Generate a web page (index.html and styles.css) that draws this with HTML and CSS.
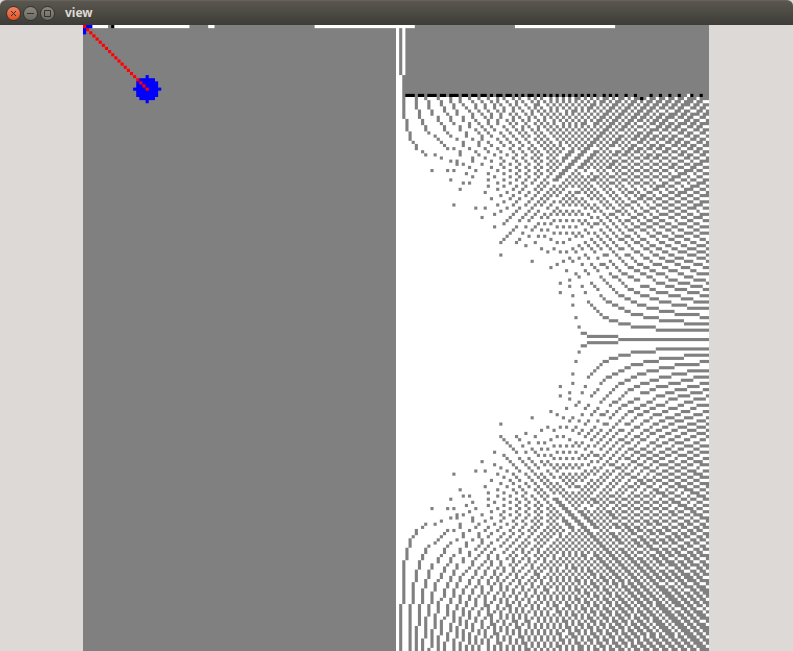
FILE: index.html
```html
<!DOCTYPE html>
<html lang="en">
<head>
<meta charset="utf-8">
<title>view</title>
<link rel="stylesheet" href="styles.css">
</head>
<body>
<header class="titlebar">
  <button class="control control-close" type="button" aria-label="Close"><svg viewBox="0 0 13 13"><path d="M4 4l5 5M9 4l-5 5"/></svg></button>
  <button class="control" type="button" aria-label="Minimize"><svg viewBox="0 0 13 13"><path d="M3 6.5h7"/></svg></button>
  <button class="control" type="button" aria-label="Maximize"><svg viewBox="0 0 13 13"><path d="M3.5 3.5h6v6h-6z"/></svg></button>
  <h1 class="title">view</h1>
</header>
<main class="stage">
  <canvas class="map" role="img" aria-label="Occupancy map"></canvas>
</main>
<script src="map.js"></script>
</body>
</html>
```
FILE: styles.css
```css
* { box-sizing: border-box; }
html, body { height: 100%; margin: 0; }
body {
  display: flex;
  flex-direction: column;
  background: #dcd9d6;
  overflow: hidden;
}
.titlebar {
  display: flex;
  flex: none;
  align-items: center;
  gap: 2px;
  height: 25px;
  padding: 0 6px;
  border-top: 1px solid #65635b;
  border-radius: 6px 6px 0 0;
  background: linear-gradient(#59574f, #3d3c37);
}
.control {
  display: block;
  width: 15px;
  height: 15px;
  padding: 0;
  border: 1px solid #33322e;
  border-radius: 50%;
  background: linear-gradient(#8b897f, #6b6961);
}
.control-close { background: linear-gradient(#f58362, #e3501f); }
.control svg {
  display: block;
  width: 13px;
  height: 13px;
  fill: none;
  stroke: #33322e;
  stroke-width: 1;
}
.title {
  margin: 0 0 0 8px;
  color: #dfdbd2;
  font: bold 12px/24px "Noto Sans", "Open Sans", sans-serif;
}
.stage {
  display: flex;
  flex: 1;
  justify-content: center;
  min-height: 0;
  padding-right: 1px;
}
.map {
  display: block;
  height: 100%;
  aspect-ratio: 1;
}
```
FILE: map.js
```js
const SIZE = 200;
const UNKNOWN = [128, 128, 128];
const FREE = [255, 255, 255];
const WALL = [0, 0, 0];
const ROBOT = [0, 0, 255];
const PATH = [255, 0, 0];
const cells = new Array(SIZE * SIZE).fill(UNKNOWN);

function put(x, y, color) {
  if (x >= 0 && y >= 0 && x < SIZE && y < SIZE) cells[y * SIZE + x] = color;
}

// Draws a line of cells, ending early at the optional stop cell.
function line(x0, y0, x1, y1, color, stop) {
  const dx = Math.abs(x1 - x0), dy = Math.abs(y1 - y0);
  const n = Math.max(dx, dy);
  for (let i = 0; i <= n; i++) {
    const x = x0 + Math.ceil((2 * i * dx - n) / (2 * n)) * Math.sign(x1 - x0);
    const y = y0 + Math.ceil((2 * i * dy - n) / (2 * n)) * Math.sign(y1 - y0);
    if (stop && (y < stop[1] || (y === stop[1] && x > stop[0]))) return;
    put(x, y, color);
  }
}

function disc(cx, cy, r) {
  for (let y = -r; y <= r; y++)
    for (let x = -r; x <= r; x++)
      if (x * x + y * y <= r * r) put(cx + x, cy + y, ROBOT);
}

// Laser sweep: 180 beams over 180 degrees from the map centre.
const BEAMS = 180, RANGE = 283, WALL_DISTANCE = 77.6;
// Beam ends, as cells across and cells away, that differ from the ideal arc.
const ENDS = {
  11: [54, 278], 18: [87, 269], 22: [106, 262], 23: [112, 260],
  25: [121, 256], 27: [129, 251], 31: [147, 242], 50: [217, 181],
  59: [243, 145], 62: [250, 132], 64: [255, 123]
};
const hits = [];
for (let k = 0; k < BEAMS; k++) {
  const m = Math.min(k, BEAMS - 1 - k);
  const side = k === m ? -1 : 1;
  const t = m * Math.PI / (BEAMS - 1);
  const [ex, ey] = ENDS[m] || [Math.round(RANGE * Math.sin(t)), Math.round(RANGE * Math.cos(t))];
  let stop;
  if (k > 1 && k < 52) {
    stop = [100 + (k === 50 ? 94 : Math.round(WALL_DISTANCE * Math.tan(t))), k === 45 ? 23 : 22];
    hits.push(stop);
  }
  line(100, 100, 100 + ex, 100 + side * ey, FREE, stop);
}
hits.forEach(([x, y]) => put(x, y, WALL));

[[3, 7], [10, 33], [40, 41], [74, 105], [138, 169]].forEach(([a, b]) => line(a, 0, b, 0, FREE));
put(9, 0, WALL);

disc(0, 0, 2);
disc(20, 20, 4);
line(0, 0, 20, 20, PATH);

// Paint with each device pixel averaged over the cells it covers.
function paint() {
  const canvas = document.querySelector(".map");
  const n = canvas.width = canvas.height = Math.round(canvas.getBoundingClientRect().height);
  const ctx = canvas.getContext("2d");
  const image = ctx.createImageData(n, n);
  const span = [];
  for (let p = 0; p < n; p++) {
    const a = p * SIZE / n, b = (p + 1) * SIZE / n, c = Math.floor(a);
    const d = Math.min(SIZE - 1, c + 1);
    span.push([c, d, b > c + 1 ? (b - c - 1) / (b - a) : 0]);
  }
  for (let y = 0; y < n; y++) for (let x = 0; x < n; x++) {
    const [x0, x1, u] = span[x], [y0, y1, v] = span[y], o = (y * n + x) * 4;
    for (let k = 0; k < 3; k++) {
      const top = cells[y0 * SIZE + x0][k] * (1 - u) + cells[y0 * SIZE + x1][k] * u;
      const low = cells[y1 * SIZE + x0][k] * (1 - u) + cells[y1 * SIZE + x1][k] * u;
      image.data[o + k] = top * (1 - v) + low * v;
    }
    image.data[o + 3] = 255;
  }
  ctx.putImageData(image, 0, 0);
}
paint();
window.addEventListener("resize", paint);
```
